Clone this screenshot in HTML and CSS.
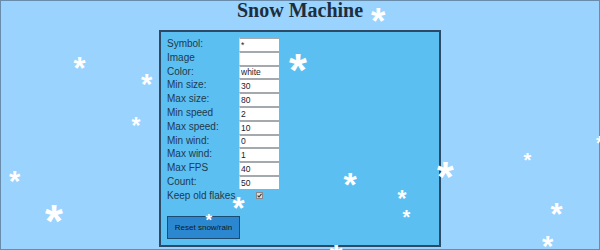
FILE: index.html
```html
<!DOCTYPE html>
<html lang="en">
<head>
<meta charset="utf-8">
<title>Snow Machine</title>
<link rel="stylesheet" href="styles.css">
</head>
<body>
<div class="page">
  <h1 class="title">Snow Machine</h1>
  <div class="panel">
    <div class="form">
      <label class="lbl">Symbol:</label><input class="field" type="text" value="*">
      <label class="lbl">Image</label><input class="field" type="text" value="">
      <label class="lbl">Color:</label><input class="field" type="text" value="white">
      <label class="lbl">Min size:</label><input class="field" type="text" value="30">
      <label class="lbl">Max size:</label><input class="field" type="text" value="80">
      <label class="lbl">Min speed</label><input class="field" type="text" value="2">
      <label class="lbl">Max speed:</label><input class="field" type="text" value="10">
      <label class="lbl">Min wind:</label><input class="field" type="text" value="0">
      <label class="lbl">Max wind:</label><input class="field" type="text" value="1">
      <label class="lbl">Max FPS</label><input class="field" type="text" value="40">
      <label class="lbl">Count:</label><input class="field" type="text" value="50">
      <label class="lbl">Keep old flakes</label>
      <span class="check"><svg viewBox="0 0 7 7" width="7" height="7"><rect x="0.5" y="0.5" width="6" height="6" fill="#dcdcdc" stroke="#8a8a8a" stroke-width="1"/><path d="M1.6 3.6 L3 5 L5.5 1.8" fill="none" stroke="#333" stroke-width="1.1"/></svg></span>
    </div>
    <button class="btn" type="button">Reset snow/rain</button>
  </div>
</div>
<div class="snow" aria-hidden="true">
  <span class="flake f1">*</span>
  <span class="flake f2">*</span>
  <span class="flake f3">*</span>
  <span class="flake f4">*</span>
  <span class="flake f5">*</span>
  <span class="flake f6">*</span>
  <span class="flake f7">*</span>
  <span class="flake f8">*</span>
  <span class="flake f9">*</span>
  <span class="flake f10">*</span>
  <span class="flake f11">*</span>
  <span class="flake f12">*</span>
  <span class="flake f13">*</span>
  <span class="flake f14">*</span>
  <span class="flake f15">*</span>
  <span class="flake f16">*</span>
  <span class="flake f17">*</span>
  <span class="flake f18">*</span>
</div>
</body>
</html>
```

FILE: styles.css
```css
html, body {
  margin: 0;
  padding: 0;
}
body {
  width: 600px;
  height: 250px;
  overflow: hidden;
  position: relative;
  font-family: "Liberation Sans", Arial, sans-serif;
}
.page {
  box-sizing: border-box;
  width: 600px;
  height: 250px;
  border: 1px solid #6a8cab;
  background: #99d3fe;
}
.title {
  margin: 0 0 11px;
  font-family: "Liberation Serif", "Times New Roman", serif;
  font-weight: bold;
  font-size: 20px;
  line-height: 18px;
  color: #1d2e3e;
  text-align: center;
}
.panel {
  box-sizing: border-box;
  width: 282px;
  margin: 0 auto;
  border: 2px solid #2c4a66;
  background: #5bbff2;
  padding: 5px 6px 6px;
}
.form {
  display: grid;
  grid-template-columns: 72px 40px;
  grid-auto-rows: 13.8px;
  align-items: center;
}
.lbl {
  font-size: 10px;
  line-height: 13.8px;
  color: #22394c;
  white-space: nowrap;
}
.field {
  box-sizing: border-box;
  width: 40px;
  height: 13.8px;
  margin: 0;
  padding: 0 0 0 1px;
  border: none;
  border-top: 2px solid #a4a9ad;
  border-left: 1px solid #d6dadd;
  background: #fff;
  font-family: "Liberation Sans", Arial, sans-serif;
  font-size: 8.5px;
  color: #1a1a2e;
  outline: none;
}
.check {
  justify-self: center;
  display: flex;
  margin-left: 1px;
  margin-top: -1px;
}
.btn {
  display: block;
  box-sizing: border-box;
  margin-top: 13.4px;
  width: 73px;
  height: 23px;
  padding: 0;
  border: 1px solid #1c4b72;
  background: #2b87d0;
  font-family: "Liberation Sans", Arial, sans-serif;
  font-size: 8px;
  color: #0e1a24;
}
.snow {
  position: absolute;
  left: 0;
  top: 0;
  width: 600px;
  height: 250px;
  overflow: hidden;
  pointer-events: none;
}
.flake {
  position: absolute;
  color: #fff;
  font-family: "Liberation Sans", Arial, sans-serif;
  font-weight: bold;
  line-height: 1;
}
.f1 { left: 289px; top: 47px; font-size: 46px; }
.f2 { left: 371px; top: 3px; font-size: 37px; }
.f3 { left: 73.5px; top: 53px; font-size: 31px; }
.f4 { left: 141px; top: 69.5px; font-size: 29px; }
.f5 { left: 131.5px; top: 115px; font-size: 23px; }
.f6 { left: 9px; top: 166.5px; font-size: 29px; }
.f7 { left: 45px; top: 197.5px; font-size: 46px; }
.f8 { left: 437px; top: 155px; font-size: 43px; }
.f9 { left: 523.5px; top: 150px; font-size: 20px; }
.f10 { left: 550.5px; top: 199px; font-size: 31px; }
.f11 { left: 542px; top: 232px; font-size: 29px; }
.f12 { left: 596px; top: 133px; font-size: 20px; }
.f13 { left: 397.5px; top: 188px; font-size: 23px; }
.f14 { left: 402.5px; top: 207px; font-size: 20px; }
.f15 { left: 343.5px; top: 166.5px; font-size: 34px; }
.f16 { left: 232.5px; top: 192.5px; font-size: 31px; }
.f17 { left: 205.5px; top: 212px; font-size: 17px; }
.f18 { left: 329.5px; top: 239px; font-size: 34px; }
```
